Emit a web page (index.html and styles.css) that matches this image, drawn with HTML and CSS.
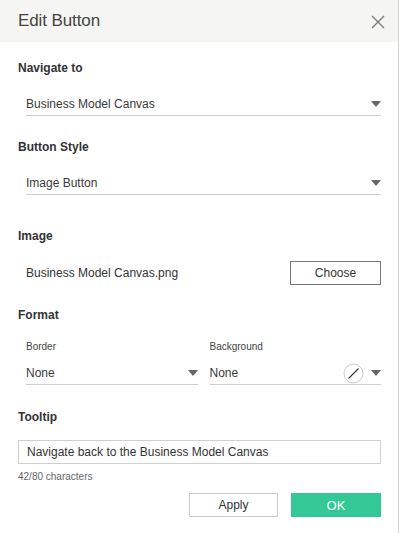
FILE: index.html
```html
<!DOCTYPE html>
<html>
<head>
<meta charset="utf-8">
<link rel="stylesheet" href="styles.css">
</head>
<body>
<div class="dialog">
  <div class="header">
    <span class="title">Edit Button</span>
    <svg class="close" width="14" height="14" viewBox="0 0 14 14"><path d="M1 1 L13 13 M13 1 L1 13" stroke="#7a7a7a" stroke-width="1.3" fill="none"/></svg>
  </div>
  <div class="body">
    <div class="label l-nav">Navigate to</div>
    <div class="select"><span>Business Model Canvas</span><span class="arrow"></span></div>

    <div class="label l-style">Button Style</div>
    <div class="select"><span>Image Button</span><span class="arrow"></span></div>

    <div class="label l-image">Image</div>
    <div class="file-row">
      <span class="file-name">Business Model Canvas.png</span>
      <button class="btn choose">Choose</button>
    </div>

    <div class="label l-format">Format</div>
    <div class="format-grid">
      <div class="fcol">
        <div class="sublabel">Border</div>
        <div class="select"><span>None</span><span class="arrow"></span></div>
      </div>
      <div class="fcol">
        <div class="sublabel">Background</div>
        <div class="select"><span>None</span>
          <span class="sel-right">
            <svg class="swatch" width="21" height="21" viewBox="0 0 21 21"><circle cx="10.5" cy="10.5" r="9.5" fill="#fff" stroke="#c8cccc" stroke-width="1"/><path d="M5.5 15.5 L15.5 5.5" stroke="#333" stroke-width="1.1"/></svg>
            <span class="arrow"></span>
          </span>
        </div>
      </div>
    </div>

    <div class="label l-tooltip">Tooltip</div>
    <div class="input">Navigate back to the Business Model Canvas</div>
    <div class="count">42/80 characters</div>

    <div class="actions">
      <button class="btn apply">Apply</button>
      <button class="btn ok">OK</button>
    </div>
  </div>
</div>
</body>
</html>
```
FILE: styles.css
```css
* { box-sizing: border-box; }
html, body { margin: 0; padding: 0; background: #fff; }
body { font-family: "Liberation Sans", Arial, sans-serif; color: #333; }

.dialog {
  width: 399px;
  height: 533px;
  border-right: 1px solid #d4d4d4;
  background: #fff;
}

.header {
  height: 42px;
  background: #f5f5f3;
  display: flex;
  align-items: center;
  justify-content: space-between;
  padding: 0 13px 0 18px;
}
.title { font-size: 17px; color: #444; letter-spacing: -0.1px; }
.close { display: block; margin-top: 1px; }

.body { padding: 0 17px 0 18px; }

.label {
  font-size: 12px;
  font-weight: bold;
  color: #333;
  line-height: 16px;
}
.l-nav { margin-top: 18px; }
.l-style { margin-top: 23px; }
.l-image { margin-top: 33px; }
.l-format { margin-top: 22px; }
.l-tooltip { margin-top: 24px; }

.select {
  margin-left: 8px;
  height: 24px;
  border-bottom: 1px solid #cfcfcf;
  display: flex;
  align-items: center;
  justify-content: space-between;
  font-size: 12px;
  color: #3a3a3a;
}
.label + .select { margin-top: 16px; }

.arrow {
  width: 0; height: 0;
  border-left: 5px solid transparent;
  border-right: 5px solid transparent;
  border-top: 6px solid #666;
  margin-right: 0;
}

.file-row {
  margin-top: 17px;
  margin-left: 8px;
  display: flex;
  align-items: center;
  justify-content: space-between;
  height: 24px;
}
.file-name { font-size: 12px; color: #333; }

.btn {
  font-family: "Liberation Sans", Arial, sans-serif;
  font-size: 12px;
  height: 24px;
  background: #fff;
  border: 1px solid #cbcbcb;
  color: #333;
  padding: 0;
  margin: 0;
}
.choose { width: 91px; border-color: #777; }

.format-grid {
  margin-top: 18px;
  display: grid;
  grid-template-columns: 1fr 1fr;
  column-gap: 4px;
}
.fcol .select { height: 24px; margin-top: 8px; }
.sublabel { font-size: 10px; line-height: 12px; color: #444; margin-left: 8px; }
.fcol:last-child .sublabel, .fcol:last-child .select { margin-left: 8px; }
.sel-right { display: flex; align-items: center; gap: 7px; }
.swatch { display: block; margin-top: 2px; }

.input {
  margin-top: 15px;
  height: 24px;
  border: 1px solid #cfcfcf;
  font-size: 12px;
  line-height: 22px;
  padding-left: 8px;
  color: #333;
}
.count {
  margin-top: 7px;
  font-size: 10px;
  line-height: 12px;
  color: #666;
}
.actions {
  margin-top: 10px;
  display: flex;
  justify-content: flex-end;
  gap: 13px;
}
.apply { width: 89px; }
.ok { width: 90px; background: #34c897; border-color: #34c897; color: #fff; font-size: 13px; }
```
